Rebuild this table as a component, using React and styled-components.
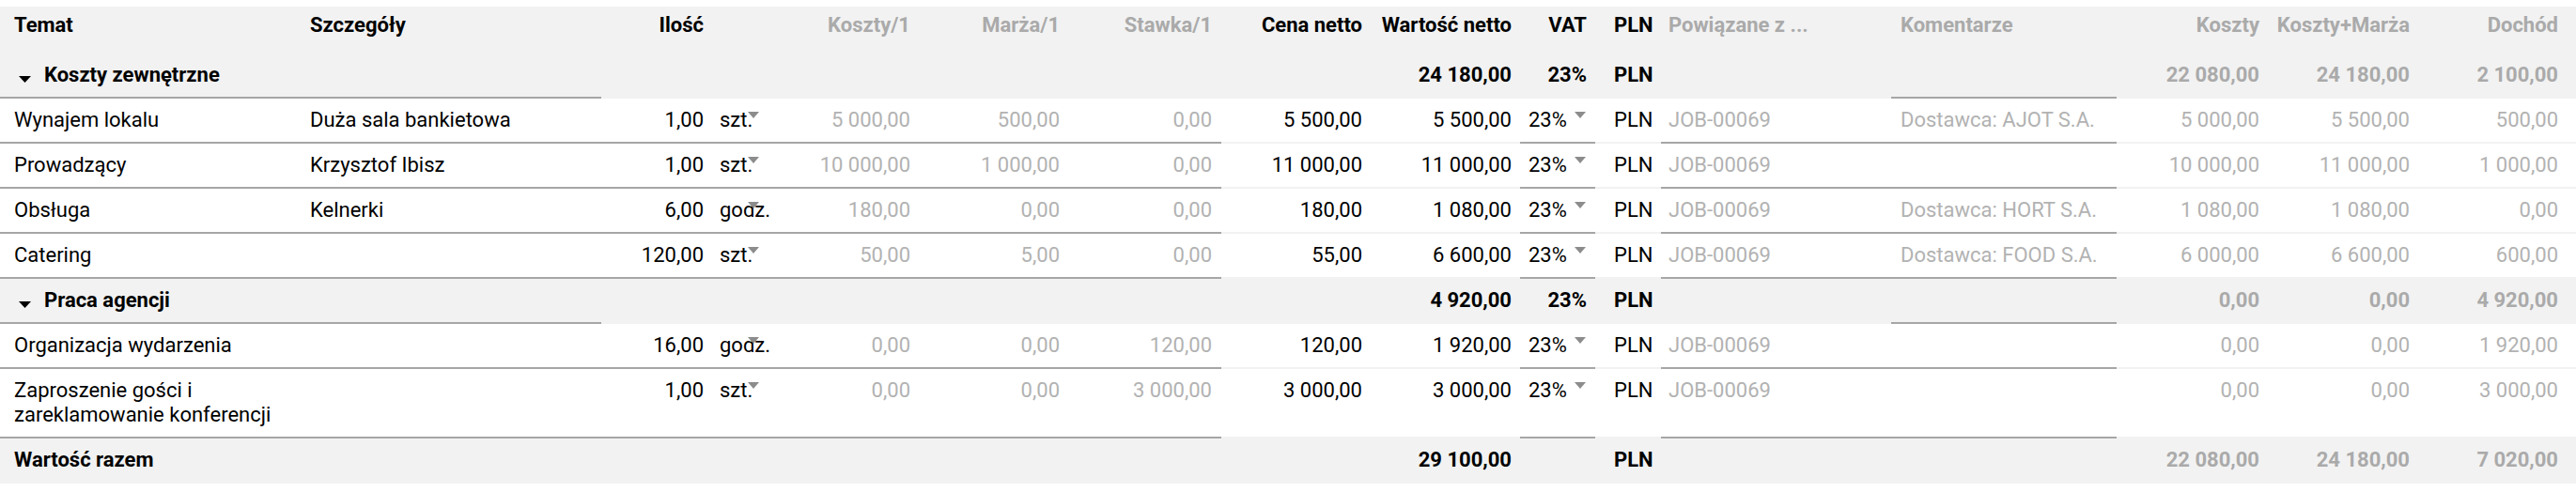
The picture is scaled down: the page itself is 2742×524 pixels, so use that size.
import React from 'react';
import styled, { createGlobalStyle, css } from 'styled-components';

const GlobalStyle = createGlobalStyle`
  body {
    margin: 0;
    background: #fff;
    font-family: Roboto, "Liberation Sans", sans-serif;
  }
`

// column widths, text alignment and inner padding
const COLS = [
  { w: 315, align: 'left', pl: 15, pr: 10 },   // Temat
  { w: 325, align: 'left', pl: 15, pr: 10 },   // Szczegóły
  { w: 117, align: 'right', pl: 4, pr: 8 },    // Ilość
  { w: 58, align: 'left', pl: 9, pr: 0 },      // jednostka
  { w: 164, align: 'right', pl: 4, pr: 10 },   // Koszty/1
  { w: 159, align: 'right', pl: 4, pr: 10 },   // Marża/1
  { w: 162, align: 'right', pl: 4, pr: 10 },   // Stawka/1
  { w: 160, align: 'right', pl: 4, pr: 10 },   // Cena netto
  { w: 158, align: 'right', pl: 4, pr: 9 },    // Wartość netto
  { w: 80, align: 'left', pl: 9, pr: 9 },      // VAT
  { w: 70, align: 'left', pl: 20, pr: 0 },     // PLN
  { w: 245, align: 'left', pl: 8, pr: 6 },     // Powiązane z
  { w: 240, align: 'left', pl: 10, pr: 6 },    // Komentarze
  { w: 162, align: 'right', pl: 4, pr: 10 },   // Koszty
  { w: 160, align: 'right', pl: 4, pr: 10 },   // Koszty+Marża
  { w: 167, align: 'right', pl: 4, pr: 19 },   // Dochód
];

const Table = styled.div`
  padding-top: 7px;
  width: 2742px;
  font-size: 22px;
  line-height: 26px;
  color: #000;
`

const Row = styled.div`
  display: grid;
  grid-template-columns: ${COLS.map(c => `${c.w}px`).join(' ')};
  background: ${p => (p.$shaded ? '#f2f2f2' : '#fff')};
`

const Cell = styled.div`
  position: relative;
  padding: ${p => (p.$head ? '7px' : '10px')} ${p => COLS[p.$col].pr}px
    ${p => (p.$head ? '15px' : '10px')} ${p => COLS[p.$col].pl}px;
  text-align: ${p => p.$align || COLS[p.$col].align};
  grid-column: ${p => (p.$span ? `span ${p.$span}` : 'auto')};
  border-bottom: 2px solid ${p => (p.$line ? '#a6a6a6' : '#f2f2f2')};
  font-weight: ${p => (p.$bold ? 700 : 400)};
  color: ${p => (p.$muted ? (p.$bold ? '#aaaaaa' : '#b2b2b2') : '#000')};
  white-space: ${p => (p.$wrap ? 'normal' : 'nowrap')};
  min-width: 0;
`

const Caret = styled.span`
  position: absolute;
  top: 14px;
  ${p => css`right: ${p.$right}px;`}
  width: 0;
  height: 0;
  border-left: 6px solid transparent;
  border-right: 6px solid transparent;
  border-top: 7px solid #8c8c8c;
`

const GroupToggle = styled.svg`
  width: 13px;
  height: 7px;
  margin: 0 14px 0 5px;
  vertical-align: -1px;
`

const HEAD = [
  ['Temat'], ['Szczegóły'], ['Ilość'], [''], ['Koszty/1', true], ['Marża/1', true],
  ['Stawka/1', true], ['Cena netto'], ['Wartość netto'], ['VAT'], ['PLN'],
  ['Powiązane z ...', true], ['Komentarze', true], ['Koszty', true],
  ['Koszty+Marża', true], ['Dochód', true],
];

const groups = [
  {
    name: 'Koszty zewnętrzne',
    total: '24 180,00',
    sums: ['22 080,00', '24 180,00', '2 100,00'],
    items: [
      ['Wynajem lokalu', 'Duża sala bankietowa', '1,00', 'szt.', '5 000,00', '500,00', '0,00', '5 500,00', '5 500,00', 'Dostawca: AJOT S.A.', '5 000,00', '5 500,00', '500,00'],
      ['Prowadzący', 'Krzysztof Ibisz', '1,00', 'szt.', '10 000,00', '1 000,00', '0,00', '11 000,00', '11 000,00', '', '10 000,00', '11 000,00', '1 000,00'],
      ['Obsługa', 'Kelnerki', '6,00', 'godz.', '180,00', '0,00', '0,00', '180,00', '1 080,00', 'Dostawca: HORT S.A.', '1 080,00', '1 080,00', '0,00'],
      ['Catering', '', '120,00', 'szt.', '50,00', '5,00', '0,00', '55,00', '6 600,00', 'Dostawca: FOOD S.A.', '6 000,00', '6 600,00', '600,00'],
    ],
  },
  {
    name: 'Praca agencji',
    total: '4 920,00',
    sums: ['0,00', '0,00', '4 920,00'],
    items: [
      ['Organizacja wydarzenia', '', '16,00', 'godz.', '0,00', '0,00', '120,00', '120,00', '1 920,00', '', '0,00', '0,00', '1 920,00'],
      ['Zaproszenie gości i zareklamowanie konferencji', '', '1,00', 'szt.', '0,00', '0,00', '3 000,00', '3 000,00', '3 000,00', '', '0,00', '0,00', '3 000,00'],
    ],
  },
];

const HeaderRow = () => (
  <Row $shaded>
    {HEAD.map(([label, muted], i) => (
      <Cell key={i} $col={i} $head $bold $muted={muted}
        $align={i === 9 ? 'right' : undefined}>
        {label}
      </Cell>
    ))}
  </Row>
)

const GroupRow = ({ group }) => (
  <Row $shaded>
    <Cell $col={0} $span={2} $line $bold>
      <GroupToggle viewBox="0 0 13 7">
        <path d="M0 0 H13 L6.5 7 Z" fill="#000" />
      </GroupToggle>
      {group.name}
    </Cell>
    {[2, 3, 4, 5, 6, 7].map(i => <Cell key={i} $col={i} />)}
    <Cell $col={8} $bold>{group.total}</Cell>
    <Cell $col={9} $bold $align="right">23%</Cell>
    <Cell $col={10} $bold>PLN</Cell>
    <Cell $col={11} />
    <Cell $col={12} $line />
    {group.sums.map((s, i) => (
      <Cell key={i} $col={13 + i} $bold $muted>{s}</Cell>
    ))}
  </Row>
)

const ItemRow = ({ item }) => {
  const [topic, details, qty, unit, cost, margin, rate, price, net, comment, c1, c2, c3] = item;
  return (
    <Row>
      <Cell $col={0} $line $wrap>{topic}</Cell>
      <Cell $col={1} $line>{details}</Cell>
      <Cell $col={2} $line>{qty}</Cell>
      <Cell $col={3} $line>
        {unit}
        <Caret $right={7} />
      </Cell>
      <Cell $col={4} $line $muted>{cost}</Cell>
      <Cell $col={5} $line $muted>{margin}</Cell>
      <Cell $col={6} $line $muted>{rate}</Cell>
      <Cell $col={7}>{price}</Cell>
      <Cell $col={8}>{net}</Cell>
      <Cell $col={9} $line>
        23%
        <Caret $right={10} />
      </Cell>
      <Cell $col={10}>PLN</Cell>
      <Cell $col={11} $line $muted>JOB-00069</Cell>
      <Cell $col={12} $line $muted>{comment}</Cell>
      <Cell $col={13} $muted>{c1}</Cell>
      <Cell $col={14} $muted>{c2}</Cell>
      <Cell $col={15} $muted>{c3}</Cell>
    </Row>
  )
}

const TotalRow = () => (
  <Row $shaded>
    <Cell $col={0} $span={2} $bold>Wartość razem</Cell>
    {[2, 3, 4, 5, 6, 7].map(i => <Cell key={i} $col={i} />)}
    <Cell $col={8} $bold>29 100,00</Cell>
    <Cell $col={9} />
    <Cell $col={10} $bold>PLN</Cell>
    <Cell $col={11} />
    <Cell $col={12} />
    <Cell $col={13} $bold $muted>22 080,00</Cell>
    <Cell $col={14} $bold $muted>24 180,00</Cell>
    <Cell $col={15} $bold $muted>7 020,00</Cell>
  </Row>
)

const App = () => (
  <>
    <GlobalStyle />
    <Table>
      <HeaderRow />
      {groups.map(g => (
        <React.Fragment key={g.name}>
          <GroupRow group={g} />
          {g.items.map(item => <ItemRow key={item[0]} item={item} />)}
        </React.Fragment>
      ))}
      <TotalRow />
    </Table>
  </>
)

export default App;
